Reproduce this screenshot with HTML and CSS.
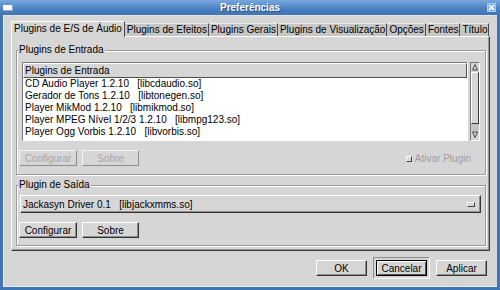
FILE: index.html
```html
<!DOCTYPE html>
<html lang="pt">
<head>
    <meta charset="UTF-8">
    <title>Preferências</title>
    <link rel="stylesheet" href="styles.css">
</head>
<body>
<div class="window">
    <div class="titlebar">
        <span class="win-menu"></span>
        <span class="win-title">Preferências</span>
        <span class="win-close">
            <svg width="7" height="7" viewBox="0 0 7 7"><path d="M1 1L6 6M6 1L1 6" stroke="#fff" stroke-width="1.6"/></svg>
        </span>
    </div>
    <div class="client">
        <div class="notebook">
            <div class="tabs">
                <div class="tab active">Plugins de E/S de Áudio</div>
                <div class="tab">Plugins de Efeitos</div>
                <div class="tab">Plugins Gerais</div>
                <div class="tab">Plugins de Visualização</div>
                <div class="tab">Opções</div>
                <div class="tab">Fontes</div>
                <div class="tab">Título</div>
            </div>
            <div class="page">
                <div class="frame input-frame">
                    <span class="frame-label">Plugins de Entrada</span>
                    <div class="list-wrap">
                        <div class="clist">
                            <div class="clist-header">Plugins de Entrada</div>
                            <div class="clist-row">CD Audio Player 1.2.10   [libcdaudio.so]</div>
                            <div class="clist-row">Gerador de Tons 1.2.10   [libtonegen.so]</div>
                            <div class="clist-row">Player MikMod 1.2.10   [libmikmod.so]</div>
                            <div class="clist-row">Player MPEG Nível 1/2/3 1.2.10   [libmpg123.so]</div>
                            <div class="clist-row">Player Ogg Vorbis 1.2.10   [libvorbis.so]</div>
                        </div>
                        <div class="vscroll">
                            <div class="stepper">
                                <svg width="8" height="8" viewBox="0 0 8 8"><path d="M1.5 7L4 1.5L6.5 7Z" fill="#d6d6d6" stroke="#444" stroke-width="1"/></svg>
                            </div>
                            <div class="thumb"></div>
                            <div class="trough"></div>
                            <div class="stepper">
                                <svg width="8" height="8" viewBox="0 0 8 8"><path d="M1.5 1L4 6.5L6.5 1Z" fill="#d6d6d6" stroke="#444" stroke-width="1"/></svg>
                            </div>
                        </div>
                    </div>
                    <div class="button-row">
                        <button class="btn" disabled>Configurar</button>
                        <button class="btn" disabled>Sobre</button>
                        <label class="check disabled"><span class="check-box"></span>Ativar Plugin</label>
                    </div>
                </div>
                <div class="frame output-frame">
                    <span class="frame-label">Plugin de Saída</span>
                    <div class="option-menu">
                        <span>Jackasyn Driver 0.1   [libjackxmms.so]</span>
                        <span class="option-ind"></span>
                    </div>
                    <div class="button-row">
                        <button class="btn">Configurar</button>
                        <button class="btn">Sobre</button>
                    </div>
                </div>
            </div>
        </div>
        <div class="actions">
            <button class="btn wide">OK</button>
            <div class="default-frame"><button class="btn wide focus">Cancelar</button></div>
            <button class="btn wide">Aplicar</button>
        </div>
    </div>
</div>
</body>
</html>
```

FILE: styles.css
```css
* {
    box-sizing: border-box;
}
body {
    margin: 0;
    font-family: "Liberation Sans", Arial, sans-serif;
    font-size: 10px;
    color: #000;
    background: #4176b6;
}
.window {
    width: 500px;
    height: 290px;
    display: flex;
    flex-direction: column;
    background: #4176b6;
}

/* barra de titulo */
.titlebar {
    height: 15px;
    display: flex;
    align-items: center;
    padding: 0 4px 0 3px;
    background: linear-gradient(#79a7dd, #4a80c2 60%, #3f74b5);
}
.win-menu {
    width: 10px;
    height: 6px;
    background: #fff;
    border-right: 1px solid #9aa7b8;
    border-bottom: 1px solid #9aa7b8;
}
.win-title {
    flex: 1;
    text-align: center;
    color: #fff;
    font-weight: bold;
    text-shadow: 1px 1px 0 #2b4f80;
}
.win-close {
    width: 9px;
    height: 9px;
    display: flex;
    align-items: center;
    justify-content: center;
    background: #7fb0ea;
    border: 1px solid #a9cbf2;
}

.client {
    flex: 1;
    margin: 0 3px 3px;
    padding: 5px 7px 0 7px;
    background: #d6d6d6;
    border-left: 1px solid #efebe0;
    border-top: 1px solid #e4e4e4;
    border-bottom: 1px solid #efebe0;
}

/* abas */
.tabs {
    display: flex;
    align-items: flex-end;
}
.tab {
    height: 13px;
    line-height: 12px;
    padding: 0 1px 0 2px;
    white-space: nowrap;
    background: #c6c6c6;
    border-top: 1px solid #ececec;
    border-right: 1px solid #4a4a4a;
}
.tab.active {
    position: relative;
    z-index: 1;
    height: 16px;
    line-height: 14px;
    margin-bottom: -1px;
    padding: 0 2px;
    background: #d6d6d6;
    border-top: 1px solid #fff;
    border-left: 1px solid #fff;
}
.page {
    height: 215px;
    padding: 13px 3px 4px 4px;
    border-top: 1px solid #fff;
    border-left: 1px solid #fff;
    border-right: 1px solid #3a3a3a;
    border-bottom: 1px solid #3a3a3a;
    box-shadow: inset -1px -1px 0 #9a9a9a;
}

/* frames */
.frame {
    padding: 0 0 0 2px;
    border: 1px solid #9a9a9a;
    box-shadow: 1px 1px 0 #fff, inset 1px 1px 0 #fff;
}
.input-frame {
    padding-bottom: 8px;
}
.output-frame {
    margin-top: 10px;
    padding-bottom: 7px;
}
.frame-label {
    display: block;
    width: fit-content;
    height: 12px;
    line-height: 12px;
    margin: -7px 0 0 -1px;
    padding: 0 1px;
    background: #d6d6d6;
}

/* lista */
.list-wrap {
    display: flex;
    gap: 2px;
    height: 79px;
    margin: 6px 5px 0 3px;
}
.clist {
    flex: 1;
    overflow: hidden;
    background: #fff;
    border: 1px solid;
    border-color: #7a7a7a #fff #fff #7a7a7a;
}
.clist-header {
    height: 15px;
    line-height: 13px;
    padding-left: 1px;
    background: #d6d6d6;
    border: 1px solid;
    border-color: #fff #505050 #505050 #fff;
}
.clist-row {
    height: 12px;
    line-height: 12px;
    padding-left: 2px;
    white-space: pre;
}
.vscroll {
    width: 10px;
    display: flex;
    flex-direction: column;
    background: #c4c4c4;
    border: 1px solid;
    border-color: #7a7a7a #fff #fff #7a7a7a;
}
.stepper {
    height: 9px;
    display: flex;
    justify-content: center;
    background: #d6d6d6;
}
.thumb {
    height: 52px;
    background: #d6d6d6;
    border: 1px solid;
    border-color: #fff #3a3a3a #3a3a3a #fff;
}
.trough {
    flex: 1;
}

/* botoes */
.button-row {
    display: flex;
    align-items: center;
    gap: 5px;
    margin-top: 9px;
}
.btn {
    width: 58px;
    height: 16px;
    padding: 0;
    font: inherit;
    color: #000;
    background: #d6d6d6;
    border: 1px solid;
    border-color: #fff #333 #333 #fff;
    box-shadow: inset -1px -1px 0 #8c8c8c;
}
.btn + .btn {
    width: 57px;
}
.btn:disabled {
    color: #a6a6a6;
    border-color: #f4f4f4 #8c8c8c #8c8c8c #f4f4f4;
    box-shadow: none;
}
.btn.wide {
    width: 51px;
}
.btn.focus {
    border-color: #000;
    box-shadow: inset 1px 1px 0 #fff, inset -1px -1px 0 #555;
}
.check {
    display: flex;
    align-items: center;
    gap: 3px;
    margin: 0 14px 0 auto;
    padding-top: 1px;
}
.check.disabled {
    color: #a0a0a0;
}
.check-box {
    width: 6px;
    height: 6px;
    background: #d6d6d6;
    border: 1px solid;
    border-color: #fff #444 #444 #fff;
}

/* menu de opcoes */
.option-menu {
    display: flex;
    align-items: center;
    justify-content: space-between;
    height: 18px;
    margin: 4px 4px 0 1px;
    padding: 0 5px 0 2px;
    white-space: pre;
    border: 1px solid;
    border-color: #fff #333 #333 #fff;
    box-shadow: inset -1px -1px 0 #8c8c8c;
}
.option-ind {
    width: 8px;
    height: 5px;
    border: 1px solid;
    border-color: #fff #444 #444 #fff;
}

/* area de acoes */
.actions {
    display: flex;
    justify-content: flex-end;
    align-items: center;
    gap: 6px;
    margin-top: 6px;
    padding-right: 3px;
}
.default-frame {
    padding: 2px;
    border: 1px solid;
    border-color: #8c8c8c #fff #fff #8c8c8c;
}
```
